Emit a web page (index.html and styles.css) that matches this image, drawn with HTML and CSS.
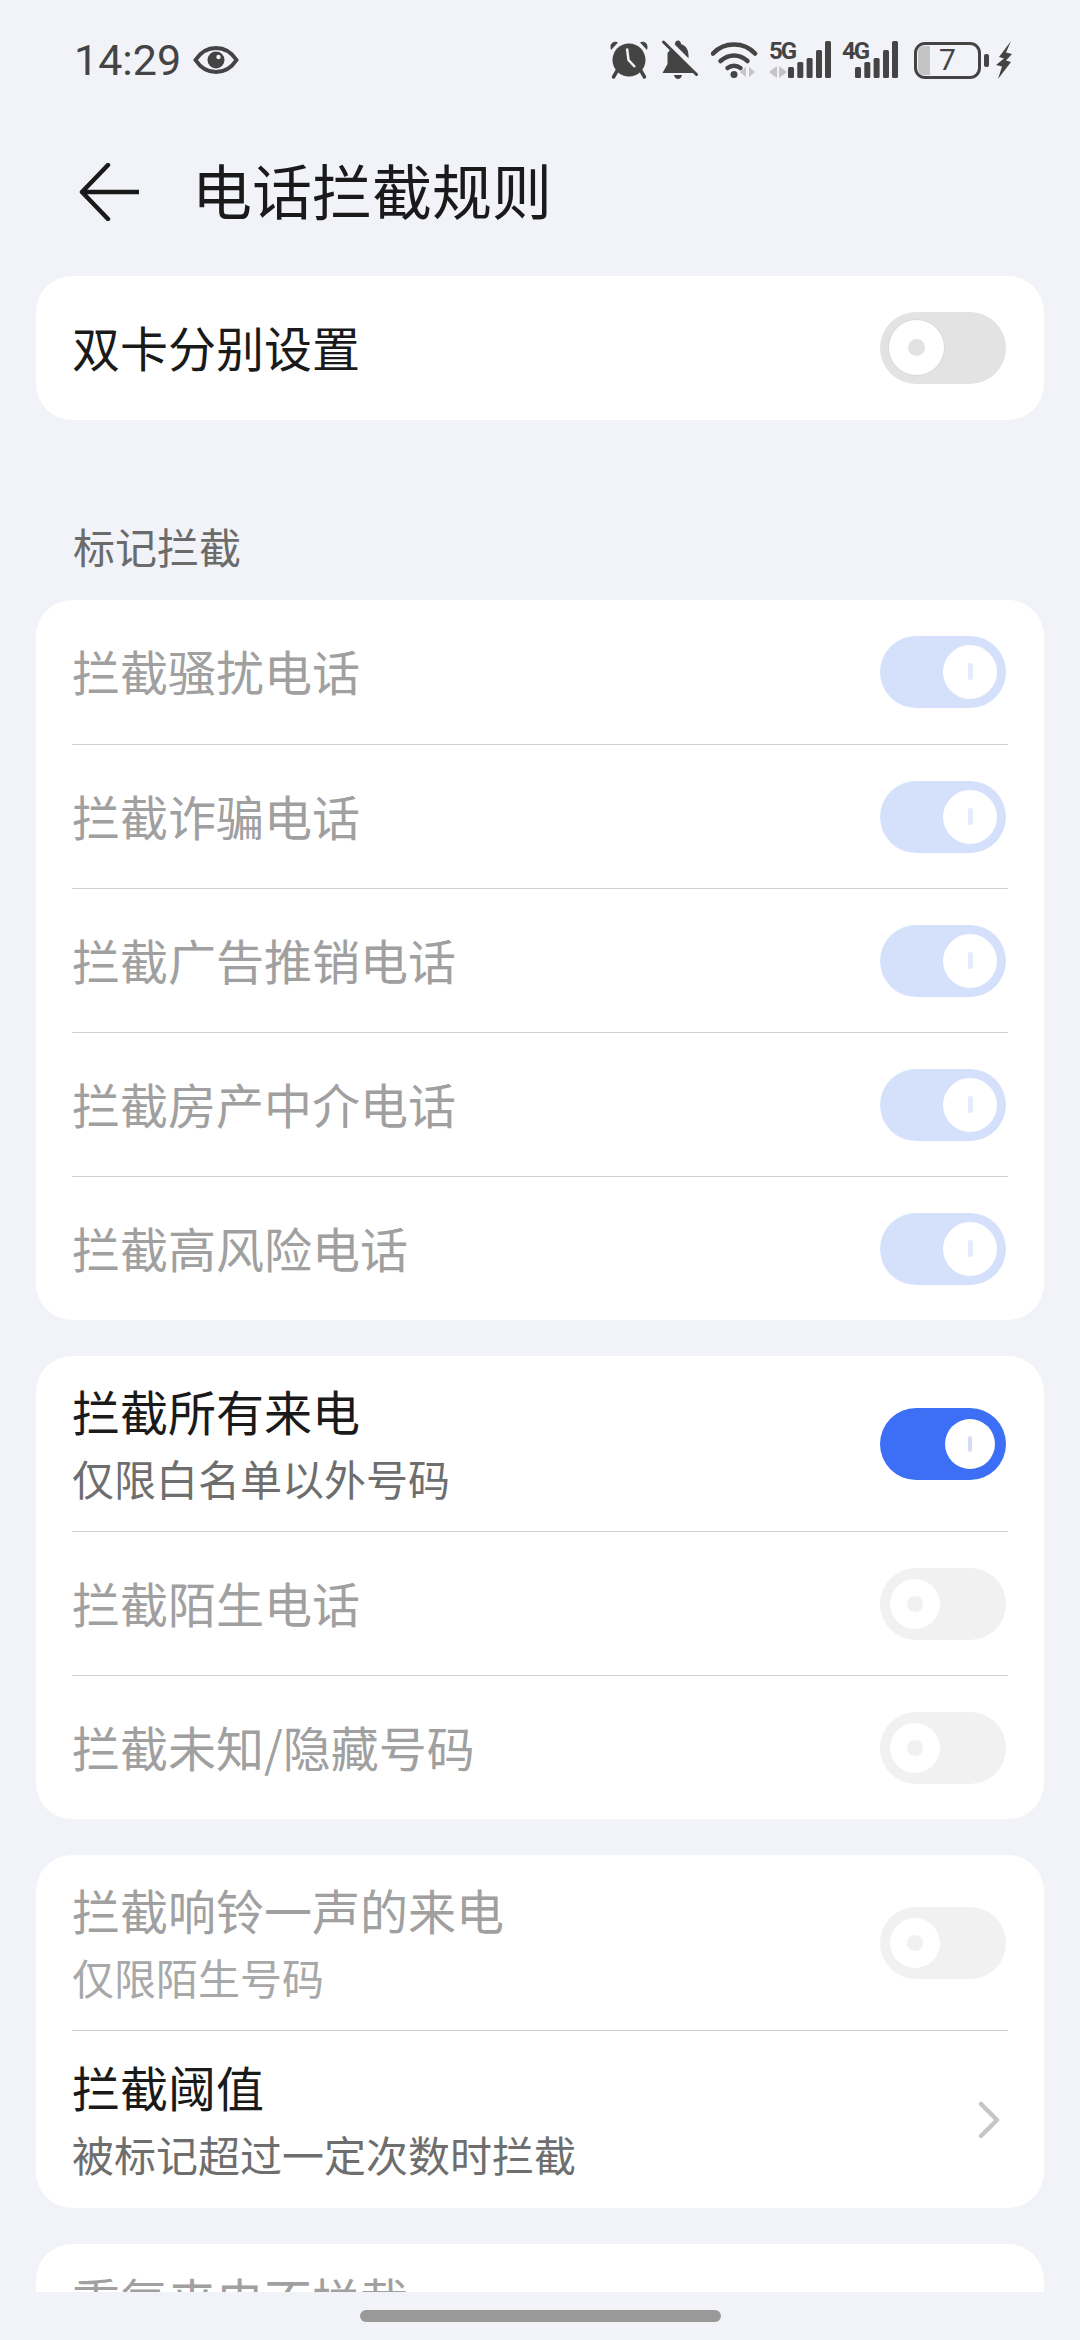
FILE: index.html
```html
<!DOCTYPE html>
<html lang="zh-CN">
<head>
    <meta charset="UTF-8">
    <meta name="viewport" content="width=device-width, initial-scale=1.0">
    <title>电话拦截规则</title>
    <link rel="stylesheet" href="styles.css">
</head>
<body>
    <div class="status-bar">
        <div class="status-left">
            <span class="clock">14:29</span>
            <svg class="icon-eye" viewBox="0 0 46 30">
                <path d="M2.5 15C8 6.5 15 3 23 3s15 3.500 20.500 12C38 23.500 31 27 23 27S8 23.500 2.500 15z" fill="none" stroke="#444" stroke-width="4"/>
                <circle cx="23" cy="15" r="8.500" fill="#444"/>
                <circle cx="25.500" cy="12" r="2.200" fill="#f1f3f8"/>
            </svg>
        </div>
        <div class="status-right">
            <!-- alarm clock -->
            <svg class="icon-alarm" viewBox="0 0 38 40">
                <path d="M1 10 8 2.500c-3-2-7.500.5-7.500 4 0 1.500.2 2.500.5 3.500zM37 10 30 2.500c3-2 7.500.5 7.500 4 0 1.500-.2 2.500-.5 3.500z" fill="#444"/>
                <path d="M7 31 3.500 37M31 31l3.500 6" stroke="#444" stroke-width="3.500" stroke-linecap="round"/>
                <circle cx="19" cy="20" r="16.500" fill="#444"/>
                <path d="M17 8.500 18.500 20 25 27" fill="none" stroke="#f1f3f8" stroke-width="2.500"/>
            </svg>
            <!-- muted bell -->
            <svg class="icon-bell" viewBox="0 0 36 40">
                <path d="M13 4c0-2 1.300-3.500 3-3.500S19 2 19 4c5 1.500 7.500 6 7.500 11v9l5 9H.5l5-9V13z" fill="#444"/>
                <path d="M12 35h8c-.5 2.500-2 4-4 4s-3.500-1.500-4-4z" fill="#444"/>
                <path d="M3 -1 37 33" stroke="#f1f3f8" stroke-width="6"/>
                <path d="M1.500 2 34.500 34.500" stroke="#444" stroke-width="3" stroke-linecap="round"/>
            </svg>
            <!-- wifi with activity arrows -->
            <svg class="icon-wifi" viewBox="0 0 48 38">
                <path d="M2 12.500C8 6 15 3.500 23 3.500s15 2.500 21 9" fill="none" stroke="#444" stroke-width="4.500" stroke-linecap="round"/>
                <path d="M9.500 20c4-3.500 8.500-5.500 13.500-5.500s9.500 2 13.500 5.500" fill="none" stroke="#444" stroke-width="4.500" stroke-linecap="round"/>
                <path d="M16.500 27c2-1.500 4-2.300 6.500-2.300s4.500.8 6.500 2.300" fill="none" stroke="#444" stroke-width="4.500" stroke-linecap="round"/>
                <circle cx="23" cy="33.500" r="3.500" fill="#444"/>
                <path d="M35 26v10l-6-5zM38 26v10l6-5z" fill="#c4c4c4"/>
            </svg>
            <!-- 5G signal -->
            <div class="net">
                <span class="net-label">5G</span>
                <svg class="net-arrows" viewBox="0 0 18 12"><path d="M8 0v12L0 6zM10 0v12l8-6z" fill="#c4c4c4"/></svg>
                <svg class="icon-bars" viewBox="0 0 43 38">
                    <rect x="0" y="26" width="6" height="11" rx="1.500"/>
                    <rect x="9.300" y="21" width="6" height="16" rx="1.500"/>
                    <rect x="18.600" y="17" width="6" height="20" rx="1.500"/>
                    <rect x="28" y="9" width="6" height="28" rx="1.500"/>
                    <rect x="37" y="0" width="6" height="37" rx="1.500"/>
                </svg>
            </div>
            <!-- 4G signal -->
            <div class="net net-second">
                <span class="net-label">4G</span>
                <svg class="icon-bars" viewBox="0 0 43 38">
                    <rect x="0" y="26" width="6" height="11" rx="1.500"/>
                    <rect x="9.300" y="21" width="6" height="16" rx="1.500"/>
                    <rect x="18.600" y="17" width="6" height="20" rx="1.500"/>
                    <rect x="28" y="9" width="6" height="28" rx="1.500"/>
                    <rect x="37" y="0" width="6" height="37" rx="1.500"/>
                </svg>
            </div>
            <div class="battery">
                <div class="battery-body">
                    <div class="battery-level"></div>
                    <span class="battery-num">7</span>
                </div>
                <div class="battery-nub"></div>
            </div>
            <svg class="icon-bolt" viewBox="0 0 16 38">
                <path d="M15 0 3 16l5 1.500L0 24l6 1.500L2 38 15 21l-5-1.500L16 13l-6-1.500z" fill="#444"/>
            </svg>
        </div>
    </div>

    <header class="page-header">
        <svg class="icon-back" viewBox="0 0 60 58">
            <path d="M29 2 3 29l26 27M3 29h57" fill="none" stroke="#1a1a1a" stroke-width="4.500" stroke-linecap="round" stroke-linejoin="round"/>
        </svg>
        <h1 class="page-title">电话拦截规则</h1>
    </header>

    <main class="content">
        <section class="card">
            <div class="row">
                <div class="row-title">双卡分别设置</div>
                <div class="switch switch-off"><span class="knob"></span></div>
            </div>
        </section>

        <div class="section-label">标记拦截</div>
        <section class="card">
            <div class="row">
                <div class="row-title muted">拦截骚扰电话</div>
                <div class="switch switch-on-dim"><span class="knob"></span></div>
            </div>
            <div class="row">
                <div class="row-title muted">拦截诈骗电话</div>
                <div class="switch switch-on-dim"><span class="knob"></span></div>
            </div>
            <div class="row">
                <div class="row-title muted">拦截广告推销电话</div>
                <div class="switch switch-on-dim"><span class="knob"></span></div>
            </div>
            <div class="row">
                <div class="row-title muted">拦截房产中介电话</div>
                <div class="switch switch-on-dim"><span class="knob"></span></div>
            </div>
            <div class="row">
                <div class="row-title muted">拦截高风险电话</div>
                <div class="switch switch-on-dim"><span class="knob"></span></div>
            </div>
        </section>

        <section class="card">
            <div class="row row-tall">
                <div>
                    <div class="row-title">拦截所有来电</div>
                    <div class="row-sub">仅限白名单以外号码</div>
                </div>
                <div class="switch switch-on"><span class="knob"></span></div>
            </div>
            <div class="row">
                <div class="row-title muted">拦截陌生电话</div>
                <div class="switch switch-off-dim"><span class="knob"></span></div>
            </div>
            <div class="row">
                <div class="row-title muted">拦截未知/隐藏号码</div>
                <div class="switch switch-off-dim"><span class="knob"></span></div>
            </div>
        </section>

        <section class="card">
            <div class="row row-tall">
                <div>
                    <div class="row-title muted">拦截响铃一声的来电</div>
                    <div class="row-sub muted">仅限陌生号码</div>
                </div>
                <div class="switch switch-off-dim"><span class="knob"></span></div>
            </div>
            <div class="row row-tall row-last">
                <div>
                    <div class="row-title">拦截阈值</div>
                    <div class="row-sub">被标记超过一定次数时拦截</div>
                </div>
                <svg class="icon-chevron" viewBox="0 0 22 38">
                    <path d="M3 3 19 19 3 35" fill="none" stroke="#c6c6c6" stroke-width="4.500" stroke-linecap="round" stroke-linejoin="round"/>
                </svg>
            </div>
        </section>

        <section class="card">
            <div class="row row-clipped">
                <div class="row-title muted">重复来电不拦截</div>
            </div>
        </section>
    </main>

    <div class="nav-bar"><div class="nav-handle"></div></div>
</body>
</html>
```

FILE: styles.css
```css
body {
    font-family: "Noto Sans CJK SC", "Noto Sans", sans-serif;
    background-color: #f1f3f8;
    margin: 0;
    display: flex;
    flex-direction: column;
    height: 2340px;
    overflow: hidden;
    color: #1a1a1a;
}

/* Status bar */
.status-bar {
    height: 120px;
    flex: none;
    display: flex;
    justify-content: space-between;
    align-items: center;
    padding: 0 68px 0 74px;
    color: #444;
}

.status-left {
    display: flex;
    align-items: center;
}

.clock {
    font-family: Roboto, sans-serif;
    font-size: 43px;
}

.icon-eye {
    width: 46px;
    height: 30px;
    margin-left: 12px;
}

.status-right {
    display: flex;
    align-items: center;
}

.icon-alarm {
    width: 38px;
    height: 40px;
}

.icon-bell {
    width: 36px;
    height: 40px;
    margin-left: 14px;
}

.icon-wifi {
    width: 48px;
    height: 38px;
    margin-left: 13px;
}

.net {
    position: relative;
    width: 62px;
    height: 38px;
    margin-left: 10px;
}

.net-second {
    width: 56px;
    margin-left: 11px;
}

.net-label {
    position: absolute;
    left: 0;
    top: -3px;
    font-family: Roboto, sans-serif;
    font-size: 24px;
    font-weight: bold;
    line-height: 26px;
    letter-spacing: -2px;
}

.net-arrows {
    position: absolute;
    left: 0;
    bottom: 1px;
    width: 18px;
    height: 12px;
}

.icon-bars {
    position: absolute;
    right: 0;
    top: 0;
    width: 43px;
    height: 38px;
    fill: #444;
}

.battery {
    display: flex;
    align-items: center;
    margin-left: 16px;
}

.battery-body {
    position: relative;
    box-sizing: border-box;
    width: 67px;
    height: 37px;
    border: 3.5px solid #444;
    border-radius: 11px;
    text-align: center;
    overflow: hidden;
}

.battery-level {
    position: absolute;
    left: 1px;
    top: 1px;
    bottom: 1px;
    width: 12px;
    background-color: #c4c4c4;
    border-radius: 6px 0 0 6px;
}

.battery-num {
    position: relative;
    font-family: Roboto, sans-serif;
    font-size: 30px;
    line-height: 30px;
    display: block;
    color: #444;
}

.battery-nub {
    width: 5px;
    height: 13px;
    margin-left: 3px;
    background-color: #444;
    border-radius: 2px;
}

.icon-bolt {
    width: 16px;
    height: 38px;
    margin-left: 7px;
}

/* Title row */
.page-header {
    height: 144px;
    flex: none;
    display: flex;
    align-items: center;
    padding-left: 79px;
}

.icon-back {
    width: 60px;
    height: 58px;
}

.page-title {
    margin: 0 0 6px 53px;
    font-size: 60px;
    font-weight: 400;
    line-height: 80px;
}

/* Scrolling list */
.content {
    flex: 1;
    min-height: 0;
    overflow: hidden;
    padding: 12px 36px 0;
    display: flex;
    flex-direction: column;
    gap: 36px;
}

.card {
    flex: none;
    background: white;
    border-radius: 36px;
    padding: 0 36px;
}

.section-label {
    margin: 54px 0 -18px;
    padding-left: 37px;
    height: 72px;
    line-height: 72px;
    font-size: 42px;
    color: #6b6b6b;
}

.row {
    position: relative;
    min-height: 144px;
    display: flex;
    justify-content: space-between;
    align-items: center;
    box-sizing: border-box;
}

.row + .row {
    border-top: 1px solid #cfcfcf;
}

.row-tall {
    min-height: 175px;
}

.row-last {
    min-height: 178px;
}

/* Title-only row cut off by the gesture bar */
.row-clipped {
    align-items: flex-start;
    padding-top: 22px;
}

.row-title {
    font-size: 48px;
    line-height: 64px;
    padding-bottom: 4px;
}

.row-sub {
    font-size: 42px;
    line-height: 64px;
    color: #6e6e6e;
}

.muted {
    color: #a0a0a0;
}

.row-sub.muted {
    color: #a8a8a8;
}

/* Toggle switches */
.switch {
    position: relative;
    flex: none;
    width: 126px;
    height: 72px;
    margin-right: 2px;
    border-radius: 36px;
}

.knob {
    position: absolute;
    border-radius: 50%;
    background: white;
}

.knob::after {
    content: "";
    position: absolute;
}

.switch-off {
    background-color: #e3e3e3;
}

.switch-off .knob {
    left: 9px;
    top: 8px;
    width: 55px;
    height: 55px;
    box-shadow: 0 0 0 1px #dadada;
}

.switch-off .knob::after {
    left: 19px;
    top: 19px;
    width: 17px;
    height: 17px;
    border-radius: 50%;
    background: #e2e2e2;
}

.switch-off-dim {
    background-color: #f1f1f2;
}

.switch-off-dim .knob {
    left: 10px;
    top: 11px;
    width: 50px;
    height: 50px;
}

.switch-off-dim .knob::after {
    left: 17px;
    top: 17px;
    width: 16px;
    height: 16px;
    border-radius: 50%;
    background: #f1f1f2;
}

.switch-on {
    background-color: #3c6ff5;
}

.switch-on .knob {
    right: 11px;
    top: 11px;
    width: 50px;
    height: 50px;
}

.switch-on .knob::after {
    left: 23px;
    top: 17px;
    width: 4px;
    height: 16px;
    border-radius: 2px;
    background: #d5dcf5;
}

.switch-on-dim {
    background-color: #d5e1fb;
}

.switch-on-dim .knob {
    right: 9px;
    top: 9px;
    width: 54px;
    height: 54px;
}

.switch-on-dim .knob::after {
    left: 25px;
    top: 18px;
    width: 5px;
    height: 17px;
    border-radius: 2px;
    background: #e5ebfb;
}

.icon-chevron {
    width: 22px;
    height: 38px;
    margin-right: 8px;
}

/* Gesture bar */
.nav-bar {
    height: 48px;
    flex: none;
    display: flex;
    justify-content: center;
    padding-top: 18px;
    box-sizing: border-box;
    background-color: #f1f3f8;
}

.nav-handle {
    width: 361px;
    height: 12px;
    border-radius: 6px;
    background-color: #999;
}
```
